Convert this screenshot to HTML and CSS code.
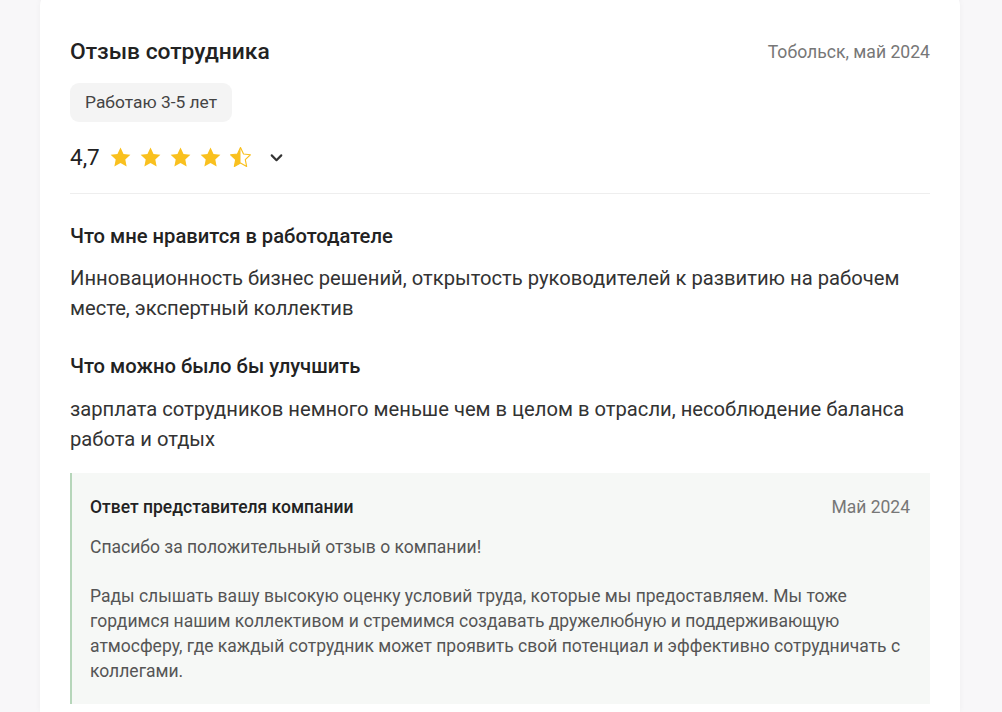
FILE: index.html
```html
<!DOCTYPE html>
<html lang="ru">
<head>
    <meta charset="UTF-8">
    <title>Отзыв сотрудника</title>
    <link rel="stylesheet" href="styles.css">
</head>
<body>
    <div class="review-card">
        <div class="review-head">
            <h2 class="review-title">Отзыв сотрудника</h2>
            <span class="review-meta">Тобольск, май 2024</span>
        </div>
        <div class="tag">Работаю 3-5 лет</div>

        <div class="rating">
            <span class="rating-value">4,7</span>
            <span class="stars">
                <svg class="star" viewBox="0 0 24 24"><path d="M12 2.5l2.9 6.1 6.6.8-4.9 4.6 1.3 6.6L12 17.3l-5.9 3.3 1.3-6.6-4.9-4.6 6.6-.8z" fill="#f9c01e"/></svg>
                <svg class="star" viewBox="0 0 24 24"><path d="M12 2.5l2.9 6.1 6.6.8-4.9 4.6 1.3 6.6L12 17.3l-5.9 3.3 1.3-6.6-4.9-4.6 6.6-.8z" fill="#f9c01e"/></svg>
                <svg class="star" viewBox="0 0 24 24"><path d="M12 2.5l2.9 6.1 6.6.8-4.9 4.6 1.3 6.6L12 17.3l-5.9 3.3 1.3-6.6-4.9-4.6 6.6-.8z" fill="#f9c01e"/></svg>
                <svg class="star" viewBox="0 0 24 24"><path d="M12 2.5l2.9 6.1 6.6.8-4.9 4.6 1.3 6.6L12 17.3l-5.9 3.3 1.3-6.6-4.9-4.6 6.6-.8z" fill="#f9c01e"/></svg>
                <svg class="star" viewBox="0 0 24 24">
                    <path d="M12 2.5l2.9 6.1 6.6.8-4.9 4.6 1.3 6.6L12 17.3l-5.9 3.3 1.3-6.6-4.9-4.6 6.6-.8z" fill="none" stroke="#f9c01e" stroke-width="1.1" stroke-linejoin="round"/>
                    <path d="M12 2.5v14.8l-5.9 3.3 1.3-6.6-4.9-4.6 6.6-.8z" fill="#f9c01e"/>
                </svg>
            </span>
            <svg class="chevron" viewBox="0 0 16 16"><path d="M3.5 6l4.5 4.5L12.5 6" fill="none" stroke="#333" stroke-width="2" stroke-linecap="round" stroke-linejoin="round"/></svg>
        </div>

        <div class="divider"></div>

        <div class="section">
            <h3 class="section-title">Что мне нравится в работодателе</h3>
            <p class="section-text">Инновационность бизнес решений, открытость руководителей к развитию на рабочем месте, экспертный коллектив</p>
        </div>
        <div class="section">
            <h3 class="section-title">Что можно было бы улучшить</h3>
            <p class="section-text">зарплата сотрудников немного меньше чем в целом в отрасли, несоблюдение баланса работа и отдых</p>
        </div>

        <!-- Company answer -->
        <div class="answer">
            <div class="answer-head">
                <span class="answer-title">Ответ представителя компании</span>
                <span class="answer-date">Май 2024</span>
            </div>
            <p class="answer-text">Спасибо за положительный отзыв о компании!</p>
            <p class="answer-text">Рады слышать вашу высокую оценку условий труда, которые мы предоставляем. Мы тоже гордимся нашим коллективом и стремимся создавать дружелюбную и поддерживающую атмосферу, где каждый сотрудник может проявить свой потенциал и эффективно сотрудничать с коллегами.</p>
        </div>
    </div>
</body>
</html>
```

FILE: styles.css
```css
body {
    margin: 0;
    padding: 0;
    font-family: Roboto, "Liberation Sans", Arial, sans-serif;
    background-color: #f8f7f9;
    color: #222;
    overflow: hidden;
}
.review-card {
    box-sizing: border-box;
    width: 920px;
    min-height: 722px;
    margin: -10px 0 0 40px;
    padding: 44px 30px 0 30px;
    background-color: #fff;
    border-radius: 16px 16px 0 0;
    box-shadow: 0 0 6px rgba(0, 0, 0, 0.04);
}
.review-head {
    display: flex;
    justify-content: space-between;
    align-items: center;
}
.review-title {
    margin: 0;
    font-size: 22.8px;
    font-weight: 500;
    line-height: 36px;
    color: #222;
}
.review-meta {
    font-size: 17.6px;
    color: #777;
}
.tag {
    display: inline-block;
    margin-top: 13px;
    padding: 0 15px;
    height: 39px;
    line-height: 39px;
    background-color: #f4f4f4;
    border-radius: 9px;
    font-size: 17.4px;
    color: #444;
}
.rating {
    display: flex;
    align-items: center;
    height: 36px;
    margin-top: 17px;
}
.rating-value {
    font-size: 22.5px;
    color: #222;
    margin-right: 8px;
}
.stars {
    display: flex;
    gap: 5px;
}
.star {
    width: 25px;
    height: 25px;
}
.chevron {
    width: 17px;
    height: 17px;
    margin-left: 15px;
}
.divider {
    height: 1px;
    background-color: #eee;
    margin-top: 18px;
}
.section {
    margin-top: 29px;
}
.section + .section {
    margin-top: 30px;
}
.section-title {
    margin: 0;
    font-size: 20.2px;
    font-weight: 500;
    line-height: 26px;
    color: #222;
}
.section-text {
    margin: 14px 0 0 0;
    font-size: 20.2px;
    line-height: 30px;
    color: #333;
}
.section + .section .section-text {
    margin-top: 15px;
}
.answer {
    margin-top: 19px;
    padding: 22px 20px 20px 18px;
    background-color: #f6f8f6;
    border-left: 2px solid #b6d6ba;
}
.answer-head {
    display: flex;
    justify-content: space-between;
    align-items: center;
    line-height: 24px;
}
.answer-title {
    font-size: 17.5px;
    font-weight: 500;
    color: #222;
}
.answer-date {
    font-size: 17.5px;
    color: #777;
}
.answer-text {
    margin: 16px 0 0 0;
    font-size: 17.5px;
    line-height: 25px;
    color: #555;
}
.answer-text + .answer-text {
    margin-top: 24px;
}
```
